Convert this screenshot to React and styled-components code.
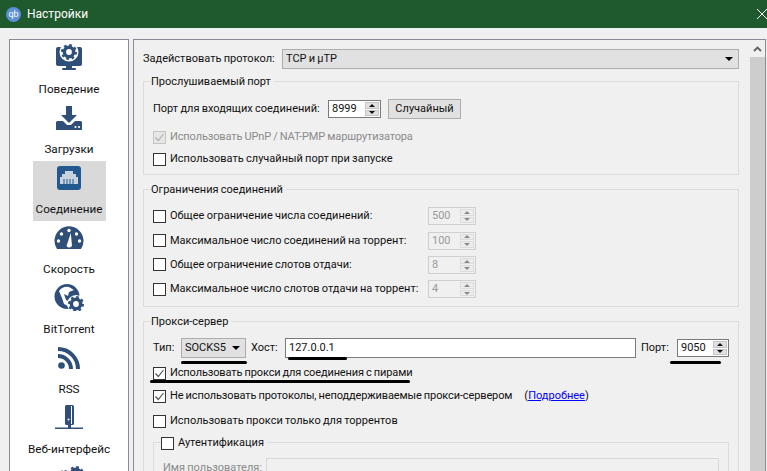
import styled, { createGlobalStyle } from "styled-components";

const GlobalStyle = createGlobalStyle`
  html, body {
    margin: 0;
    padding: 0;
    background: #f0f0f0;
  }
  * {
    box-sizing: border-box;
  }
`;

const INK = "#2f4f78";

const Page = styled.div`
  position: relative;
  width: 767px;
  height: 471px;
  overflow: hidden;
  background: #f0f0f0;
  color: #111;
  font-family: Roboto, "Noto Sans", sans-serif;
  font-size: 11px;
  line-height: 16px;
`;

const TitleBar = styled.div`
  display: flex;
  align-items: center;
  gap: 6px;
  height: 28px;
  padding-left: 6px;
  background: #1f5a2e;
  color: #fff;
  font-size: 12px;
`;

const AppLogo = styled.div`
  display: flex;
  align-items: center;
  justify-content: center;
  width: 15px;
  height: 15px;
  border-radius: 50%;
  background: #5b8fd6;
  color: #fff;
  font-size: 9px;
  line-height: 15px;
`;

const CloseIcon = styled.svg`
  margin-left: auto;
  width: 10px;
  height: 10px;
`;

const Body = styled.div`
  display: flex;
  gap: 4px;
  height: 443px;
  padding: 11px 1px 0 9px;
`;

const Sidebar = styled.nav`
  display: flex;
  flex-direction: column;
  align-items: center;
  flex: 0 0 120px;
  padding-top: 1px;
  background: #fff;
  border: 1px solid #8a8a96;
  border-bottom: 0;
  overflow: hidden;
  font-size: 11.7px;
`;

const NavItem = styled.div`
  display: flex;
  flex-direction: column;
  align-items: center;
  flex: 0 0 60px;
  width: ${(p) => (p.$active ? "73px" : "auto")};
  padding-top: 2px;
  background: ${(p) => (p.$active ? "#d9d9d9" : "transparent")};
`;

const NavLabel = styled.span`
  margin-top: 10px;
  white-space: nowrap;
`;

const Panel = styled.div`
  display: flex;
  flex: 1;
  min-width: 0;
  border: 1px solid #8a8a96;
  border-bottom: 0;
`;

const Content = styled.div`
  flex: 1;
  min-width: 0;
  padding: 9px 10px 0 9px;
  overflow: hidden;
  word-spacing: -0.5px;
`;

const Scrollbar = styled.div`
  display: flex;
  flex-direction: column;
  flex: 0 0 16px;
  padding-left: 1px;
`;

const ScrollUp = styled.div`
  display: flex;
  align-items: center;
  justify-content: center;
  flex: 0 0 17px;
  background: #f0f0f0;
`;

const ScrollThumb = styled.div`
  flex: 1;
  background: #cdcdcd;
`;

const Row = styled.div`
  display: flex;
  align-items: center;
  height: ${(p) => p.$h || 20}px;
  margin-top: ${(p) => p.$mt || 0}px;
  white-space: nowrap;
  letter-spacing: ${(p) => (p.$tight ? "-0.12px" : "normal")};
  color: ${(p) => (p.$muted ? "#8b8b8b" : "inherit")};
`;

const Label = styled.span`
  flex: 0 0 ${(p) => (p.$w ? `${p.$w}px` : "auto")};
`;

const Group = styled.section`
  position: relative;
  margin-top: ${(p) => p.$mt}px;
  height: ${(p) => p.$h}px;
  padding: ${(p) => p.$pt}px 9px 0 9px;
  border: 1px solid #dcdcdc;
`;

const GroupTitle = styled.div`
  position: absolute;
  top: -8px;
  left: 7px;
  display: flex;
  align-items: center;
  padding-right: 3px;
  background: #f0f0f0;
`;

const ComboBox = styled.div`
  display: flex;
  align-items: center;
  justify-content: space-between;
  flex: ${(p) => (p.$w ? `0 0 ${p.$w}px` : "1")};
  height: 20px;
  padding: 0 5px 0 3px;
  background: #e1e1e1;
  border: 1px solid #adadad;
`;

const ComboArrow = styled.span`
  width: 0;
  height: 0;
  border-left: 4px solid transparent;
  border-right: 4px solid transparent;
  border-top: 4px solid #000;
`;

const Button = styled.div`
  display: flex;
  align-items: center;
  justify-content: center;
  width: 73px;
  height: 20px;
  margin-left: 7px;
  background: #e1e1e1;
  border: 1px solid #adadad;
`;

const TextInput = styled.div`
  display: flex;
  align-items: center;
  flex: 1;
  height: 20px;
  padding: 0 3px;
  background: ${(p) => (p.$disabled ? "#f0f0f0" : "#fff")};
  border: 1px solid ${(p) => (p.$disabled ? "#d9d9d9" : "#7a7a7a")};
`;

const Spin = styled.div`
  display: flex;
  align-items: center;
  justify-content: space-between;
  flex: 0 0 ${(p) => p.$w}px;
  height: 18px;
  margin-left: ${(p) => p.$ml || 0}px;
  padding: 0 1px 0 3px;
  background: ${(p) => (p.$disabled ? "#f0f0f0" : "#fff")};
  color: ${(p) => (p.$disabled ? "#9a9a9a" : "#111")};
  border: 1px solid ${(p) => (p.$disabled ? "#cfcfcf" : "#7a7a7a")};
`;

const Stepper = styled.div`
  display: flex;
  flex-direction: column;
  gap: 1px;
  width: 14px;
  height: 14px;
`;

const StepButton = styled.div`
  display: flex;
  align-items: center;
  justify-content: center;
  flex: 1;
  background: ${(p) => (p.$disabled ? "#ececec" : "#e1e1e1")};
  border: 1px solid ${(p) => (p.$disabled ? "#dcdcdc" : "#c4c4c4")};
`;

const StepArrow = styled.span`
  width: 0;
  height: 0;
  border-left: 3px solid transparent;
  border-right: 3px solid transparent;
  ${(p) => (p.$down ? "border-top" : "border-bottom")}: 3px solid
    ${(p) => (p.$disabled ? "#8a8a8a" : "#111")};
`;

const Box = styled.span`
  display: flex;
  align-items: center;
  justify-content: center;
  flex: 0 0 13px;
  height: 13px;
  margin-right: 4px;
  background: ${(p) => (p.$disabled ? "#e6e6e6" : "#fff")};
  border: 1px solid ${(p) => (p.$disabled ? "#c4c4c4" : "#333")};
`;

const Link = styled.a`
  color: #0000ff;
  text-decoration: underline;
`;

const HelpLink = styled.span`
  margin-left: 12px;
  letter-spacing: normal;
`;

const Field = styled.span`
  margin-left: ${(p) => p.$ml}px;
  flex: 0 0 ${(p) => p.$w}px;
`;

// чёрные линии, нарисованные поверх скриншота
const Mark = styled.div`
  position: absolute;
  left: ${(p) => p.$x}px;
  top: ${(p) => p.$y}px;
  width: ${(p) => p.$w}px;
  height: 3px;
  border-radius: 2px;
  background: #000;
`;

function Check({ checked, disabled }) {
  return (
    <Box $disabled={disabled}>
      {checked && (
        <svg width="11" height="11" viewBox="0 0 11 11">
          <path
            d="M1.5 5.5 L4.3 8.5 L9.5 2"
            fill="none"
            stroke={disabled ? "#b0b0b0" : "#555"}
            strokeWidth="1.2"
          />
        </svg>
      )}
    </Box>
  );
}

function CheckRow({ checked, disabled, tight, mt, h, children }) {
  return (
    <Row $mt={mt} $h={h} $muted={disabled} $tight={tight}>
      <Check checked={checked} disabled={disabled} />
      {children}
    </Row>
  );
}

function SpinBox({ value, w, ml, disabled }) {
  return (
    <Spin $w={w} $ml={ml} $disabled={disabled}>
      {value}
      <Stepper>
        <StepButton $disabled={disabled}>
          <StepArrow $disabled={disabled} />
        </StepButton>
        <StepButton $disabled={disabled}>
          <StepArrow $down $disabled={disabled} />
        </StepButton>
      </Stepper>
    </Spin>
  );
}

function Gear({ x, y, r, fill = INK, hole = "#fff" }) {
  const teeth = 2 * Math.PI * (r - 1);
  return (
    <g>
      <circle cx={x} cy={y} r={r - 1.6} fill={fill} />
      <circle
        cx={x}
        cy={y}
        r={r - 1}
        fill="none"
        stroke={fill}
        strokeWidth="2"
        strokeDasharray={`${teeth / 16} ${teeth / 16}`}
      />
      <circle cx={x} cy={y} r={r * 0.36} fill={hole} />
    </g>
  );
}

const icons = {
  behavior: (
    <>
      <rect x="2" y="4" width="26" height="19" rx="2" fill={INK} />
      <rect x="12" y="23" width="6" height="3" fill={INK} />
      <rect x="8" y="25" width="14" height="2" rx="1" fill={INK} />
      <circle cx="15" cy="9" r="9.5" fill="#fff" />
      <Gear x={15} y={9} r={8} />
    </>
  ),
  downloads: (
    <>
      <path d="M12 3 H18 V12 H23 L15 20 L7 12 H12 Z" fill={INK} />
      <path
        d="M3.5 18 H9 L13 22 H17 L21 18 H26.5 Q28 18 28 19.5 V27 H2 V19.5 Q2 18 3.5 18 Z"
        fill={INK}
      />
      <circle cx="21.5" cy="24" r="1.1" fill="#fff" />
      <circle cx="25" cy="24" r="1.1" fill="#fff" />
    </>
  ),
  connection: (
    <>
      <rect x="3" y="3" width="24" height="24" rx="3" fill="#23598f" />
      <path d="M11 8 H19 V11 H22 V14 H24 V21 H6 V14 H8 V11 H11 Z" fill="#c8d3df" />
      <path d="M10 16 V21 M13 16 V21 M16 16 V21 M19 16 V21" stroke="#23598f" strokeWidth="1" />
    </>
  ),
  speed: (
    <>
      <path d="M3 26 A14.5 14.5 0 1 1 27 26 Z" fill={INK} />
      <circle cx="15" cy="7.5" r="1.7" fill="#fff" />
      <circle cx="7.5" cy="11" r="1.7" fill="#fff" />
      <circle cx="22.5" cy="11" r="1.7" fill="#fff" />
      <circle cx="4.5" cy="18" r="1.7" fill="#fff" />
      <circle cx="25.5" cy="18" r="1.7" fill="#fff" />
      <path d="M16.8 10 L18 23 Q15 26 12.5 23 Z" fill="#fff" />
    </>
  ),
  bittorrent: (
    <>
      <circle cx="13" cy="13.5" r="12.5" fill={INK} />
      <path
        d="M5 8 Q9 3 15 4 L20 7 L15 9 L14 13 L10 11 L12 17 L16 19 L14 23 L10 21 L8 15 Z"
        fill="#fff"
      />
      <circle cx="22" cy="21" r="9" fill="#fff" />
      <Gear x={22} y={21} r={8} />
    </>
  ),
  rss: (
    <>
      <circle cx="7.5" cy="22.5" r="3.3" fill={INK} />
      <path d="M4 13 A13 13 0 0 1 17 26" fill="none" stroke={INK} strokeWidth="4" />
      <path d="M4 6 A20 20 0 0 1 24 26" fill="none" stroke={INK} strokeWidth="4" />
    </>
  ),
  webui: (
    <>
      <rect x="11" y="2" width="9" height="20" rx="1.5" fill={INK} />
      <rect x="17" y="3" width="1" height="18" fill="#fff" />
      <circle cx="14.5" cy="16.5" r="1" fill="#fff" />
      <rect x="14" y="22" width="3" height="3" fill={INK} />
      <rect x="1" y="24.5" width="28" height="1.5" fill={INK} />
    </>
  ),
  advanced: (
    <>
      <Gear x={22} y={11} r={8} />
      <Gear x={10} y={13} r={6} />
    </>
  ),
};

const navItems = [
  { icon: "behavior", label: "Поведение" },
  { icon: "downloads", label: "Загрузки" },
  { icon: "connection", label: "Соединение", active: true },
  { icon: "speed", label: "Скорость" },
  { icon: "bittorrent", label: "BitTorrent" },
  { icon: "rss", label: "RSS" },
  { icon: "webui", label: "Веб-интерфейс" },
  { icon: "advanced" },
];

const limits = [
  { label: "Общее ограничение числа соединений:", value: 500 },
  { label: "Максимальное число соединений на торрент:", value: 100 },
  { label: "Общее ограничение слотов отдачи:", value: 8 },
  { label: "Максимальное число слотов отдачи на торрент:", value: 4 },
];

export default function App() {
  return (
    <Page>
      <GlobalStyle />
      <TitleBar>
        <AppLogo>qb</AppLogo>
        Настройки
        <CloseIcon viewBox="0 0 10 10">
          <path d="M0 0 L10 10 M10 0 L0 10" stroke="#fff" strokeWidth="1" />
        </CloseIcon>
      </TitleBar>
      <Body>
        <Sidebar>
          {navItems.map((item) => (
            <NavItem key={item.icon} $active={item.active}>
              <svg width="30" height="28" viewBox="0 0 30 28">
                {icons[item.icon]}
              </svg>
              {item.label && <NavLabel>{item.label}</NavLabel>}
            </NavItem>
          ))}
        </Sidebar>
        <Panel>
          <Content>
            <Row>
              <Label $w={139}>Задействовать протокол:</Label>
              <ComboBox>
                TCP и µTP
                <ComboArrow />
              </ComboBox>
            </Row>

            <Group $mt={12} $h={94} $pt={17}>
              <GroupTitle>Прослушиваемый порт</GroupTitle>
              <Row>
                <Label $w={175}>Порт для входящих соединений:</Label>
                <SpinBox value="8999" w={53} />
                <Button>Случайный</Button>
              </Row>
              <CheckRow checked disabled tight mt={8}>
                Использовать UPnP / NAT-PMP маршрутизатора
              </CheckRow>
              <CheckRow mt={2}>Использовать случайный порт при запуске</CheckRow>
            </Group>

            <Group $mt={14} $h={118} $pt={17}>
              <GroupTitle>Ограничения соединений</GroupTitle>
              {limits.map((limit, i) => (
                <CheckRow key={limit.label} mt={i ? 6 : 0} h={18.4}>
                  <Label $w={258}>{limit.label}</Label>
                  <SpinBox value={limit.value} w={48} disabled />
                </CheckRow>
              ))}
            </Group>

            <Group $mt={14} $h={200} $pt={16}>
              <GroupTitle>Прокси-сервер</GroupTitle>
              <Row>
                <Label $w={28}>Тип:</Label>
                <ComboBox $w={65}>
                  SOCKS5
                  <ComboArrow />
                </ComboBox>
                <Field $ml={5} $w={34}>
                  Хост:
                </Field>
                <TextInput>127.0.0.1</TextInput>
                <Field $ml={5} $w={36}>
                  Порт:
                </Field>
                <SpinBox value="9050" w={52} />
              </Row>
              <CheckRow checked tight mt={5}>
                Использовать прокси для соединения с пирами
              </CheckRow>
              <CheckRow checked tight mt={3}>
                Не использовать протоколы, неподдерживаемые прокси-сервером
                <HelpLink>
                  (<Link>Подробнее</Link>)
                </HelpLink>
              </CheckRow>
              <CheckRow mt={5}>Использовать прокси только для торрентов</CheckRow>
              <Group $mt={11} $h={60} $pt={15}>
                <GroupTitle>
                  <Check />
                  Аутентификация
                </GroupTitle>
                <Row $muted>
                  <Label $w={103}>Имя пользователя:</Label>
                  <TextInput $disabled />
                </Row>
              </Group>
            </Group>
          </Content>
          <Scrollbar>
            <ScrollUp>
              <svg width="9" height="6" viewBox="0 0 9 6">
                <path d="M1 5 L4.5 1.5 L8 5" fill="none" stroke="#606060" strokeWidth="1.8" />
              </svg>
            </ScrollUp>
            <ScrollThumb />
          </Scrollbar>
        </Panel>
      </Body>
      <Mark $x={181} $y={361} $w={66} />
      <Mark $x={288} $y={357} $w={59} />
      <Mark $x={150} $y={380} $w={260} />
      <Mark $x={670} $y={361} $w={51} />
    </Page>
  );
}
